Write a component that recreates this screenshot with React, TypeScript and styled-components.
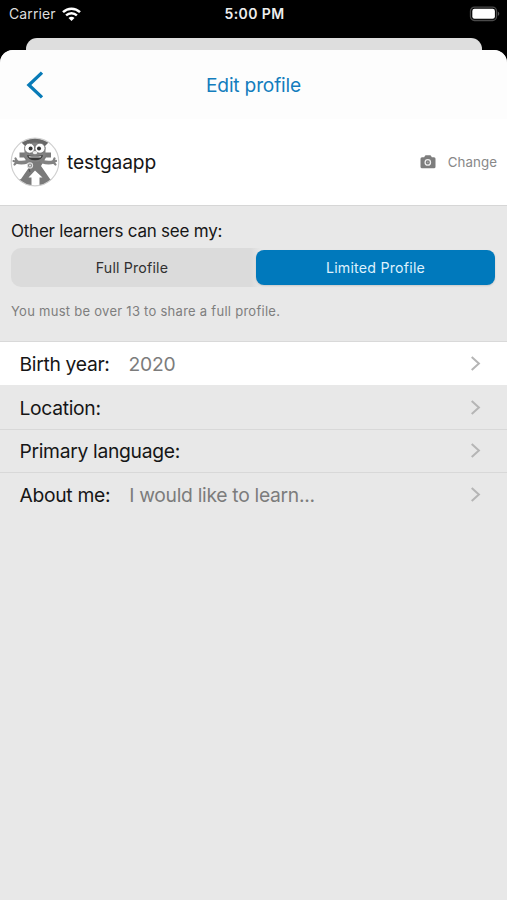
import React from "react";
import styled, { createGlobalStyle } from "styled-components";

const Global = createGlobalStyle`
  * { box-sizing: border-box; }
  body { margin: 0; background: #000; font-family: Inter, "Liberation Sans", sans-serif; }
  button { border: 0; padding: 0; background: none; font-family: inherit; color: inherit; }
  svg { display: block; flex: none; }
`;

const Screen = styled.div`
  width: 507px;
  height: 900px;
  display: flex;
  flex-direction: column;
  overflow: hidden;
  background: #000;
`;

const Text = styled.span<{ $size: number; $track?: number; $color?: string; $weight?: number }>`
  font-size: ${(p) => p.$size}px;
  letter-spacing: ${(p) => p.$track ?? 0}px;
  color: ${(p) => p.$color ?? "#161616"};
  font-weight: ${(p) => p.$weight ?? 400};
  white-space: pre;
`;

const StatusBar = styled.header`
  display: grid;
  grid-template-columns: 1fr auto 1fr;
  align-items: center;
  height: 38px;
  padding: 0 7px 10px 9px;
  line-height: 28px;
`;

const Carrier = styled.div`
  display: flex;
  align-items: center;
  gap: 6px;
`;

const BatterySlot = styled.div`
  display: flex;
  justify-content: flex-end;
  padding-bottom: 1px;
`;

const BackSheet = styled.div`
  flex: none;
  height: 12px;
  margin: 0 25px 0 26px;
  border-radius: 11px 11px 0 0;
  background: #dedede;
`;

const Sheet = styled.main`
  flex: 1;
  display: flex;
  flex-direction: column;
  overflow: hidden;
  border-radius: 13px 13px 0 0;
  background: #e8e8e8;
`;

const NavBar = styled.nav`
  display: grid;
  grid-template-columns: 60px 1fr 60px;
  align-items: center;
  justify-items: center;
  height: 69px;
  flex: none;
  background: #fdfdfd;
`;

const BackButton = styled.button`
  justify-self: start;
  margin-left: 26px;
`;

const Profile = styled.section`
  display: flex;
  align-items: center;
  height: 87px;
  flex: none;
  padding: 0 10px 0 10px;
  border-bottom: 1px solid #d6d6d6;
  background: #fff;
`;

const Name = styled.div`
  flex: 1;
  padding-left: 7px;
`;

const ChangeButton = styled.button`
  display: flex;
  align-items: center;
  gap: 12px;
`;

const Visibility = styled.section`
  display: flex;
  flex-direction: column;
  height: 136px;
  flex: none;
  padding: 12px 12px 0 11px;
  border-bottom: 1px solid #d9d9d9;
`;

const Heading = styled.div`
  height: 30px;
  line-height: 26px;
`;

const Segments = styled.div`
  display: grid;
  grid-template-columns: 245px 239px;
  height: 39px;
  align-items: center;
  border-radius: 10px;
  background: linear-gradient(90deg, #dbdbdb 240px, #e8e8e8 250px);
`;

const Segment = styled.button<{ $selected?: boolean }>`
  height: 35px;
  border-radius: 8px;
  padding-right: ${(p) => (p.$selected ? 0 : 3)}px;
  background: ${(p) => (p.$selected ? "#0079bc" : "transparent")};
  box-shadow: ${(p) => (p.$selected ? "0 1px 2px #0002" : "none")};
`;

const Note = styled.div`
  padding-top: 13px;
  line-height: 20px;
`;

const Row = styled.div<{ $active?: boolean; $line?: boolean; $height: number }>`
  display: grid;
  grid-template-columns: auto 1fr auto;
  align-items: center;
  column-gap: 19px;
  height: ${(p) => p.$height}px;
  flex: none;
  padding: 0 25px 0 19.5px;
  line-height: 26px;
  background: ${(p) => (p.$active ? "#fff" : "#e8e8e8")};
  border-bottom: 1px solid ${(p) => (p.$line ? "#d8d8d8" : "#e8e8e8")};
`;

const Wifi = () => (
  <svg width="19" height="15" viewBox="0 0 19 15" fill="none" stroke="#fff">
    <path d="M1 5.2C5.8.6 13.2.6 18 5.2" strokeWidth="2.5" />
    <path d="M4.1 8.4c3.1-2.9 7.7-2.9 10.8 0" strokeWidth="2.4" />
    <path d="M6.5 10.9c1.7-1.6 4.3-1.6 6 0l-3 3z" fill="#fff" stroke="none" />
  </svg>
);

const Battery = () => (
  <svg width="31" height="16" viewBox="0 0 31 16">
    <rect x="1.5" y="1.1" width="26" height="13.4" rx="4" fill="none" stroke="#4a4a4a" strokeWidth="1.3" />
    <rect x="3.3" y="2.8" width="22.6" height="10" rx="2.2" fill="#fff" />
    <path d="M28.8 5.6c2 .9 2 3.4 0 4.4z" fill="#555" />
  </svg>
);

const Back = () => (
  <svg width="18" height="28" viewBox="0 0 18 28" fill="none" stroke="#087bb7" strokeWidth="3.3">
    <path d="M16 1.6 2.9 14 16 26.4" />
  </svg>
);

const Chevron = () => (
  <svg width="12" height="16" viewBox="0 0 12 16" fill="none" stroke="#b5b5b5" strokeWidth="2">
    <path d="m1.7 1.1 7.2 6.5-7.2 6.5" />
  </svg>
);

const Camera = () => (
  <svg width="16" height="14" viewBox="0 0 16 14">
    <path
      d="M2 2.2h2.2L5 .8Q5.2.3 5.8.3h4.4q.6 0 .8.5l.8 1.4H14q1.5 0 1.5 1.5v8q0 1.5-1.5 1.5H2Q.5 13.2.5 11.7v-8Q.5 2.2 2 2.2z"
      fill="#7d7d7d"
    />
    <circle cx="7.8" cy="7.4" r="2.7" fill="#7d7d7d" stroke="#eee" strokeWidth="1.3" />
    <circle cx="7.8" cy="7.4" r=".8" fill="#aaa" />
  </svg>
);

const Avatar = () => (
  <svg width="50" height="50" viewBox="0 0 50 50">
    <defs>
      <clipPath id="avatar-edge">
        <circle cx="25" cy="25" r="24" />
      </clipPath>
    </defs>
    <circle cx="25" cy="25" r="24" fill="#fff" />
    <g clipPath="url(#avatar-edge)">
      <path d="M9.500 15.500H41v5h-5l-5 8.500 9 13 2 1v8H8v-8l3-1 9-13-6-8.500H9.500z" fill="#7a7a7a" />
      <g fill="none" stroke="#828282" strokeLinecap="round">
        <path d="M18 24.500Q12 26.500 6.500 25" strokeWidth="3.600" />
        <path d="M32 24.500q6 2 11.500.5" strokeWidth="3.600" />
        <path d="m7.500 25-2-3.500M7 25l-3.500-1M7 25l-2.500 2.500M43 25l1.500-3.500M43 25l3-1M43 25l2.500 2.500" strokeWidth="2.200" />
      </g>
      <path d="M11 5 25 0l14 5-5 5H16z" fill="#686868" />
      <path d="M14.500 10q10.500-9 21 0v9q-3.500 6-10.500 6-7.500 0-10.500-6z" fill="#828282" />
      <path d="M25 33.500 18.500 40.500h3V50h8v-9.500h3z" fill="#fff" />
      <circle cx="19.600" cy="11.200" r="5" fill="#fff" stroke="#666" strokeWidth=".7" />
      <circle cx="30" cy="11.200" r="5" fill="#fff" stroke="#666" strokeWidth=".7" />
      <circle cx="20.600" cy="11.500" r="2" fill="#333" />
      <circle cx="29" cy="11.500" r="2" fill="#333" />
      <ellipse cx="25" cy="15.600" rx="2.400" ry="1.700" fill="#eee" />
      <path d="M17 18.200q8 1.500 16 0-1 5-8 5t-8-5z" fill="#383838" />
      <path d="M18.500 19q6.500 1 13 0l-1 1.500H19.500z" fill="#ddd" />
      <circle cx="20" cy="28.500" r="2.600" fill="#888" stroke="#ddd" strokeWidth="1.100" />
      <circle cx="20" cy="28.500" r=".9" fill="#eee" />
      <path d="m19 32 1 3" stroke="#555" strokeWidth="1.200" />
    </g>
    <circle cx="25" cy="25" r="23.800" fill="none" stroke="#d0d0d0" strokeWidth="1.200" />
  </svg>
);

const fields = [
  { label: "Birth year:", value: "2020", height: 44, active: true },
  { label: "Location:", value: "", height: 44, line: true },
  { label: "Primary language:", value: "", height: 43, line: true },
  { label: "About me:", value: "I would like to learn...", height: 44 },
];

export default function App() {
  return (
    <>
      <Global />
      <Screen>
        <StatusBar>
          <Carrier>
            <Text $size={14} $color="#ddd" $track={0.1}>Carrier</Text>
            <Wifi />
          </Carrier>
          <Text $size={14} $weight={600} $color="#eee" $track={0.38}>5:00 PM</Text>
          <BatterySlot><Battery /></BatterySlot>
        </StatusBar>
        <BackSheet />
        <Sheet>
          <NavBar>
            <BackButton aria-label="Back"><Back /></BackButton>
            <Text $size={19.2} $color="#147dbd" $track={-0.2}>Edit profile</Text>
          </NavBar>
          <Profile>
            <Avatar />
            <Name><Text $size={19.2} $track={-0.14}>testgaapp</Text></Name>
            <ChangeButton>
              <Camera />
              <Text $size={13.3} $color="#888" $track={0.08}>Change</Text>
            </ChangeButton>
          </Profile>
          <Visibility>
            <Heading><Text $size={17} $track={-0.23}>Other learners can see my:</Text></Heading>
            <Segments>
              <Segment><Text $size={14.2} $color="#303030" $track={0.18}>Full Profile</Text></Segment>
              <Segment $selected><Text $size={14.2} $color="#def1fc" $track={0.22}>Limited Profile</Text></Segment>
            </Segments>
            <Note><Text $size={13} $color="#7e7e7e" $track={0.27}>You must be over 13 to share a full profile.</Text></Note>
          </Visibility>
          {fields.map((f) => (
            <Row key={f.label} $height={f.height} $active={f.active} $line={f.line}>
              <Text $size={19.3} $track={-0.31}>{f.label}</Text>
              <Text $size={19.3} $track={-0.3} $color="#7c7c7c">{f.value}</Text>
              <Chevron />
            </Row>
          ))}
        </Sheet>
      </Screen>
    </>
  );
}
